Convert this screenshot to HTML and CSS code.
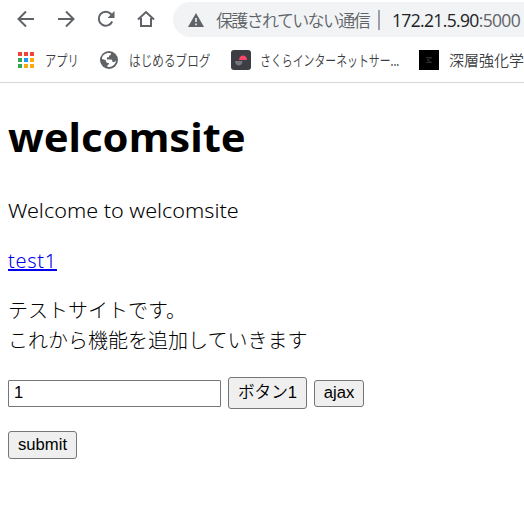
FILE: index.html
```html
<!DOCTYPE html>
<html lang="ja">
<head>
<meta charset="utf-8">
<title>welcomsite</title>
<link rel="stylesheet" href="styles.css">
</head>
<body>
<header class="browser">
  <div class="toolbar">
    <svg class="nav" viewBox="0 0 20 20"><path d="M18 10H3M10 2.500 2.500 10l7.500 7.500"/></svg>
    <svg class="nav" viewBox="0 0 20 20"><path d="M2 10h15M10 2.500 17.500 10 10 17.500"/></svg>
    <svg class="nav" viewBox="0 0 20 20"><path d="M16.200 12.500A7 7 0 1 1 15 5l2 2"/><path class="solid" d="M18.500 2v7h-7z"/></svg>
    <svg class="nav" viewBox="0 0 20 20"><path d="M2 10.500 10 3l8 7.500M5 9v8h10V9"/></svg>
    <div class="address">
      <svg class="warning" viewBox="0 0 16 14"><path fill="#5f6368" d="M8 0l8 14H0z"/><path fill="#f1f3f4" d="M7.200 5h1.600v4H7.200zM7.200 10.500h1.600v1.700H7.200z"/></svg>
      <span class="insecure">保護されていない通信</span>
      <i class="divider"></i>
      <span class="url">172.21.5.90<span class="port">:5000</span></span>
    </div>
  </div>
  <nav class="bookmarks">
    <div class="bookmark apps">
      <svg viewBox="0 0 16 16" width="16" height="16"><path fill="#f44336" d="M0 0h4v4H0zM6 0h4v4H6zM12 0h4v4h-4z"/><path fill="#34a853" d="M0 6h4v4H0zM0 12h4v4H0z"/><path fill="#2196f3" d="M6 6h4v4H6z"/><path fill="#fbaa0b" d="M12 6h4v4h-4zM6 12h4v4H6zM12 12h4v4h-4z"/></svg>
      <span class="label">アプリ</span>
    </div>
    <div class="bookmark blog">
      <svg viewBox="0 0 18 18" width="18" height="18"><circle cx="9" cy="9" r="9" fill="#5f6368"/><path fill="#fff" d="M2 8C2 4.500 5 2 9 2l2 .2c0 1.500-.5 2.300-2 2.300v1.700H7v2.300h4c1.400 0 1.500 2 1.500 2.500h1.800c.7 0 .7-1 1.700-1.500-.2 3.500-3.300 6.500-7 6.500H7.500v-2C9 14 9 12.500 9 12H7.500C6 12 6 9.500 5.500 9z"/></svg>
      <span class="label">はじめるブログ</span>
    </div>
    <div class="bookmark sakura">
      <svg viewBox="0 0 20 20" width="20" height="20"><rect width="20" height="20" rx="3" fill="#3c3e43"/><path fill="#ff4569" d="M8 10c0-6 8-6 8 0z"/><path fill="#77777b" d="M4 11h7.500c0 6-7.500 6-7.500 0z"/></svg>
      <span class="label">さくらインターネットサー...</span>
    </div>
    <div class="bookmark study">
      <svg viewBox="0 0 20 20" width="20" height="20"><path d="M0 0h20v20H0z"/><path fill="none" stroke="#2a2a2a" d="M7 7.500h6l-5 3 5 2H7M8 8l4 5"/></svg>
      <span class="label">深層強化学</span>
    </div>
  </nav>
</header>
<main>
  <h1><span>welcomsite</span></h1>
  <p><span class="welcome">Welcome to welcomsite</span></p>
  <p><a href="#">test1</a></p>
  <p class="notice">テストサイトです。<br>これから機能を追加していきます</p>
  <form>
    <div class="controls"><input type="text" value="1"><button class="primary" type="button">ボタン1</button><button class="ajax" type="button">ajax</button></div>
    <button class="submit" type="button">submit</button>
  </form>
</main>
</body>
</html>
```
FILE: styles.css
```css
* { box-sizing: border-box; }
body { margin: 0; width: 524px; height: 529px; overflow: hidden; background: #fff; color: #000; font-family: "Noto Sans", "Noto Sans CJK JP", sans-serif; }
svg { flex: none; display: block; }
.browser { height: 83px; border-bottom: 1px solid #d5d7da; overflow: hidden; }
.toolbar { height: 38px; display: flex; align-items: center; padding-left: 16px; gap: 20px; }
.nav { width: 20px; height: 20px; fill: none; stroke: #5f6368; stroke-width: 2; }
.nav .solid { fill: #5f6368; stroke: none; }
.address { flex: none; display: flex; align-items: center; width: 380px; height: 35px; margin-left: -3px; margin-top: 1px; padding-left: 15px; border-radius: 18px; background: #f1f3f4; white-space: nowrap; }
.warning { width: 16px; height: 14px; }
.insecure { width: 154px; margin-left: 12px; font: 350 17px/30px "Noto Sans CJK JP", sans-serif; letter-spacing: -1.65px; color: #5f6368; }
.divider { width: 2px; height: 20px; margin-left: 8px; background: #9aa0a6; }
.url { margin-left: 12px; font: 17.500px/30px "Open Sans", sans-serif; letter-spacing: -.65px; color: #202124; }
.port { color: #5f6368; }
.bookmarks { height: 44px; display: flex; align-items: center; padding-left: 18px; }
.bookmark { flex: none; display: flex; align-items: center; white-space: nowrap; gap: 11px; }
.label { font: 350 15px/24px "Noto Sans CJK JP", sans-serif; color: #3c4043; transform-origin: left; }
.apps { width: 82px; }
.blog { width: 131px; }
.sakura { width: 188px; gap: 9px; }
.apps .label { transform: scaleX(.75); }
.blog .label { transform: scaleX(.775); }
.sakura .label { transform: scaleX(.725); }
.study { gap: 10px; }
main { padding: 24px 8px 0; font-size: 20px; line-height: 30px; }
h1 { margin: 0; height: 60px; font-family: "Noto Sans", sans-serif; font-size: 40px; line-height: 60px; }
h1 span, .welcome { display: inline-block; vertical-align: top; transform-origin: left; white-space: nowrap; }
h1 span { transform: scaleX(1.043); }
.welcome { transform: scaleX(1.078); font-weight: 300; }
p { margin: 0 0 20px; }
h1 + p { margin-top: 29px; }
a { color: #00e; text-decoration: underline; letter-spacing: .7px; font-weight: 300; }
.notice { font-family: "Noto Sans CJK JP", sans-serif; font-weight: 300; margin-top: -1px; margin-bottom: 22px; }
input, button { margin: 0; font: 16.667px/20px "Liberation Sans", "Noto Sans CJK JP", sans-serif; color: #000; border: 1px solid #767676; }
input { width: 213px; height: 27px; padding: 1px 5px; border-radius: 1px; background: #fff; }
button { height: 28px; padding: 0; border-radius: 3px; background: #efefef; }
.primary { font-family: "Liberation Sans", "Noto Sans CJK JP", sans-serif; font-weight: 350; }
.controls { display: flex; align-items: center; height: 32px; margin-bottom: 22px; }
.primary { width: 79px; height: 32px; margin: 0 7px; }
.ajax { width: 50px; height: 27px; }
form .submit { display: block; width: 69px; }
```
